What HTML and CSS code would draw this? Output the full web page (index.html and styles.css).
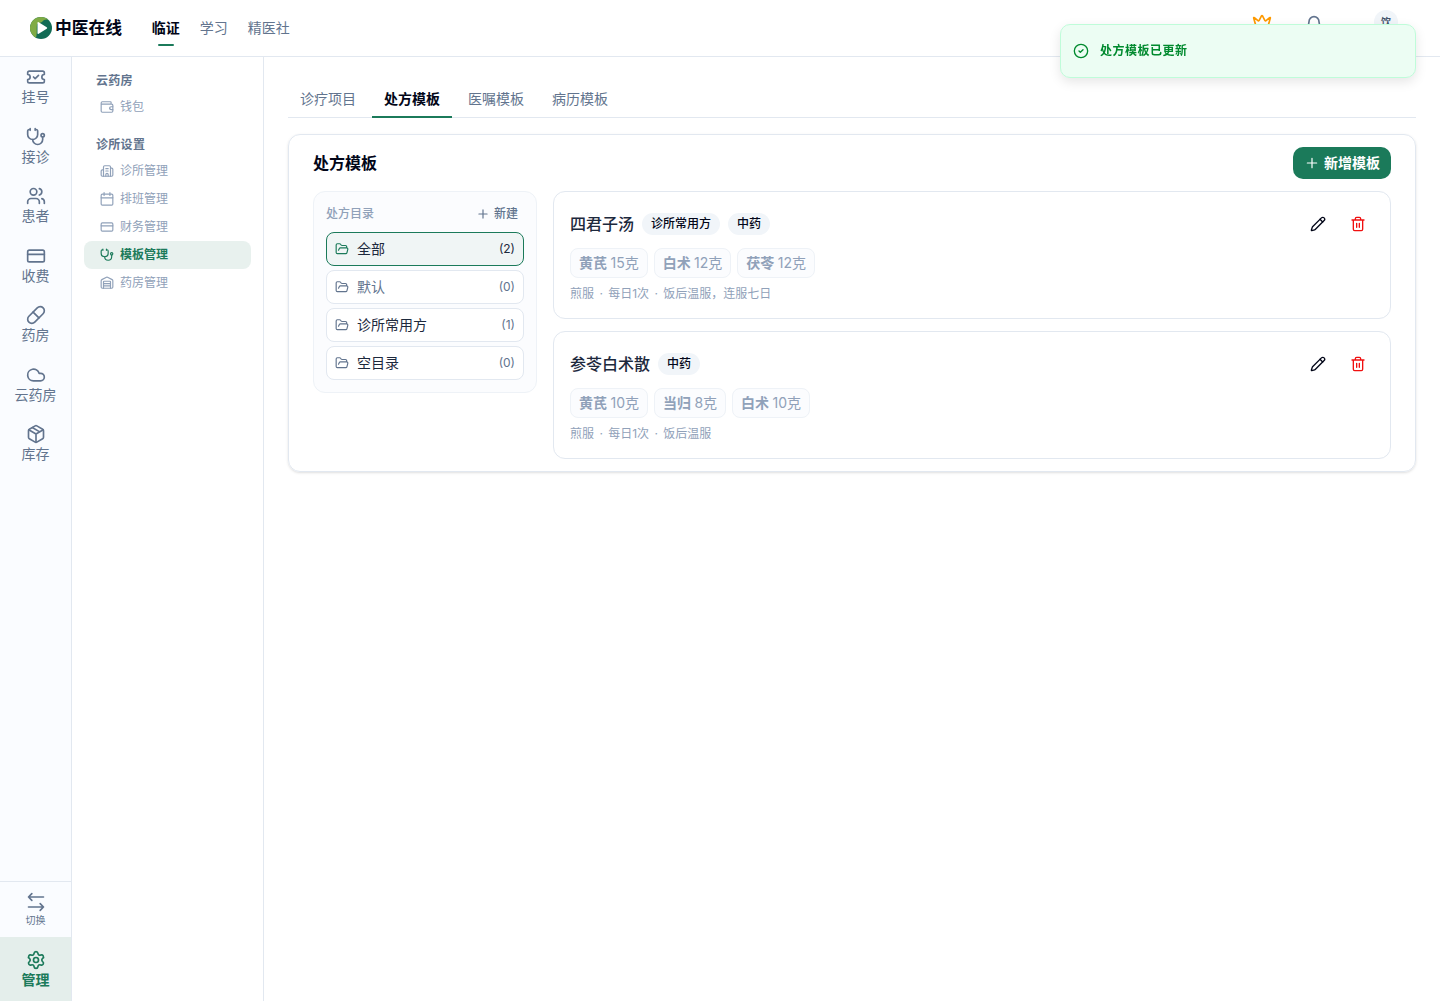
FILE: index.html
```html
<!DOCTYPE html>
<html lang="zh-CN">
<head>
<meta charset="UTF-8">
<title>处方模板</title>
<link rel="stylesheet" href="styles.css">
</head>
<body>
<svg class="sprite">
	<symbol id="ticket" viewBox="0 0 24 24"><path d="M2 9a3 3 0 1 1 0 6v2a2 2 0 0 0 2 2h16a2 2 0 0 0 2-2v-2a3 3 0 1 1 0-6V7a2 2 0 0 0-2-2H4a2 2 0 0 0-2 2Z"/><path d="m9 12 2 2 4-4"/></symbol>
	<symbol id="stethoscope" viewBox="0 0 24 24"><path d="M11 2v2M5 2v2M5 3H4a2 2 0 0 0-2 2v4a6 6 0 0 0 12 0V5a2 2 0 0 0-2-2h-1"/><path d="M8 15a6 6 0 0 0 12 0v-3"/><circle cx="20" cy="10" r="2"/></symbol>
	<symbol id="users" viewBox="0 0 24 24"><path d="M16 21v-2a4 4 0 0 0-4-4H6a4 4 0 0 0-4 4v2"/><path d="M16 3.128a4 4 0 0 1 0 7.744M22 21v-2a4 4 0 0 0-3-3.87"/><circle cx="9" cy="7" r="4"/></symbol>
	<symbol id="card" viewBox="0 0 24 24"><rect width="20" height="14" x="2" y="5" rx="2"/><path d="M2 10h20"/></symbol>
	<symbol id="pill" viewBox="0 0 24 24"><path d="m10.5 20.5 10-10a4.95 4.95 0 1 0-7-7l-10 10a4.95 4.95 0 1 0 7 7Z"/><path d="m8.5 8.5 7 7"/></symbol>
	<symbol id="cloud" viewBox="0 0 24 24"><path d="M17.5 19H9a7 7 0 1 1 6.71-9h1.79a4.5 4.5 0 1 1 0 9Z"/></symbol>
	<symbol id="package" viewBox="0 0 24 24"><path d="M11 21.73a2 2 0 0 0 2 0l7-4A2 2 0 0 0 21 16V8a2 2 0 0 0-1-1.73l-7-4a2 2 0 0 0-2 0l-7 4A2 2 0 0 0 3 8v8a2 2 0 0 0 1 1.73z"/><path d="M12 22V12M3.29 7 12 12l8.71-5M7.5 4.27l9 5.15"/></symbol>
	<symbol id="switch" viewBox="0 0 24 24"><path d="M7 2 3 6l4 4M3 6h18M17 14l4 4-4 4M21 18H3"/></symbol>
	<symbol id="settings" viewBox="0 0 24 24"><path d="M9.671 4.136a2.34 2.34 0 0 1 4.659 0 2.34 2.34 0 0 0 3.319 1.915 2.34 2.34 0 0 1 2.33 4.033 2.34 2.34 0 0 0 0 3.831 2.34 2.34 0 0 1-2.33 4.033 2.34 2.34 0 0 0-3.319 1.915 2.34 2.34 0 0 1-4.659 0 2.34 2.34 0 0 0-3.32-1.915 2.34 2.34 0 0 1-2.33-4.033 2.34 2.34 0 0 0 0-3.831A2.34 2.34 0 0 1 6.35 6.051a2.34 2.34 0 0 0 3.319-1.915"/><circle cx="12" cy="12" r="3"/></symbol>
	<symbol id="wallet" viewBox="0 0 24 24"><path d="M17 14h.01"/><path d="M19 7V4a1 1 0 0 0-1-1H4a2 2 0 0 0-2 2v14a2 2 0 0 0 2 2h16a2 2 0 0 0 2-2V9a2 2 0 0 0-2-2H3.5"/><path d="M22 11.5h-3a2.5 2.5 0 0 0 0 5h3"/></symbol>
	<symbol id="hospital" viewBox="0 0 24 24"><path d="M10 12h4M10 8h4M14 21v-3a2 2 0 0 0-4 0v3"/><path d="M6 10H4a2 2 0 0 0-2 2v7a2 2 0 0 0 2 2h16a2 2 0 0 0 2-2V9a2 2 0 0 0-2-2h-2"/><path d="M6 21V5a2 2 0 0 1 2-2h8a2 2 0 0 1 2 2v16"/></symbol>
	<symbol id="calendar" viewBox="0 0 24 24"><path d="M7 1v5M17 1v5M2 10h20"/><rect width="20" height="19" x="2" y="3.500" rx="2"/></symbol>
	<symbol id="warehouse" viewBox="0 0 24 24"><path d="M18 21V10a1 1 0 0 0-1-1H7a1 1 0 0 0-1 1v11"/><path d="M22 19a2 2 0 0 1-2 2H4a2 2 0 0 1-2-2V8a2 2 0 0 1 1.132-1.803l7.95-3.974a2 2 0 0 1 1.837 0l7.948 3.974A2 2 0 0 1 22 8z"/><path d="M6 13h12M6 17h12"/></symbol>
	<symbol id="folder" viewBox="0 0 24 24"><path d="m6 14 1.5-2.9A2 2 0 0 1 9.24 10H20a2 2 0 0 1 1.94 2.5l-1.54 6a2 2 0 0 1-1.95 1.5H4a2 2 0 0 1-2-2V5a2 2 0 0 1 2-2h3.9a2 2 0 0 1 1.69.9l.81 1.2a2 2 0 0 0 1.67.9H18a2 2 0 0 1 2 2v2"/></symbol>
	<symbol id="plus" viewBox="0 0 24 24"><path d="M5 12h14M12 5v14"/></symbol>
	<symbol id="pencil" viewBox="0 0 24 24"><path d="M21.174 6.812a1 1 0 0 0-3.986-3.987L3.842 16.174a2 2 0 0 0-.5.83l-1.321 4.352a.5.5 0 0 0 .623.622l4.353-1.32a2 2 0 0 0 .83-.497z"/><path d="m15 5 4 4"/></symbol>
	<symbol id="trash" viewBox="0 0 24 24"><path d="M3 6h18M19 6v14a2 2 0 0 1-2 2H7a2 2 0 0 1-2-2V6M8 6V4a2 2 0 0 1 2-2h4a2 2 0 0 1 2 2v2M10 11v6M14 11v6"/></symbol>
	<symbol id="crown" viewBox="0 0 24 24"><path d="M11.562 3.266a.5.5 0 0 1 .876 0L15.39 8.87a1 1 0 0 0 1.516.294L21.183 5.5a.5.5 0 0 1 .798.519l-2.834 10.246a1 1 0 0 1-.956.734H5.81a1 1 0 0 1-.957-.734L2.02 6.02a.5.5 0 0 1 .798-.519l4.276 3.664a1 1 0 0 0 1.516-.294z"/><path d="M5 21h14"/></symbol>
	<symbol id="bell" viewBox="0 0 24 24"><path d="M10.268 21a2 2 0 0 0 3.464 0"/><path d="M3.262 15.326A1 1 0 0 0 4 17h16a1 1 0 0 0 .74-1.673C19.41 13.956 18 12.499 18 8A6 6 0 0 0 6 8c0 4.499-1.411 5.956-2.738 7.326"/></symbol>
	<symbol id="check" viewBox="0 0 24 24"><circle cx="12" cy="12" r="10"/><path d="m9 12 2 2 4-4"/></symbol>
</svg>

<header class="header">
	<div class="logo">
		<svg viewBox="0 0 22 22">
			<circle cx="11" cy="11" r="11" fill="#126b55"/>
			<path d="M6 20.8A11 11 0 0 1 11 0c3 0 5.500 1 7.400 2.700C16 2 13.500 2.600 12 5L7 7c-.6 5 .3 9.500-1 13.800Z" fill="#7fab45"/>
			<path d="M7.500 6v10q0 1.300 1.200.7l8-4.900q1.100-.8 0-1.600l-8-4.900Q7.500 4.700 7.500 6Z" fill="#fff"/>
		</svg>
		<span>中医在线</span>
	</div>
	<nav class="top_nav">
		<a class="on">临证</a>
		<a>学习</a>
		<a>精医社</a>
	</nav>
	<div class="tools">
		<svg class="icon crown"><use href="#crown"/></svg>
		<svg class="icon bell"><use href="#bell"/></svg>
		<span class="avatar">饮</span>
	</div>
</header>

<div class="wrap">
	<aside class="rail">
		<a><svg class="icon"><use href="#ticket"/></svg><span>挂号</span></a>
		<a><svg class="icon"><use href="#stethoscope"/></svg><span>接诊</span></a>
		<a><svg class="icon"><use href="#users"/></svg><span>患者</span></a>
		<a><svg class="icon"><use href="#card"/></svg><span>收费</span></a>
		<a><svg class="icon"><use href="#pill"/></svg><span>药房</span></a>
		<a><svg class="icon"><use href="#cloud"/></svg><span>云药房</span></a>
		<a><svg class="icon"><use href="#package"/></svg><span>库存</span></a>
		<a class="switch"><svg class="icon"><use href="#switch"/></svg><span>切换</span></a>
		<a class="manage"><svg class="icon"><use href="#settings"/></svg><span>管理</span></a>
	</aside>

	<aside class="menu">
		<div class="group">
			<h3>云药房</h3>
			<a><svg class="icon"><use href="#wallet"/></svg>钱包</a>
		</div>
		<div class="group">
			<h3>诊所设置</h3>
			<a><svg class="icon"><use href="#hospital"/></svg>诊所管理</a>
			<a><svg class="icon"><use href="#calendar"/></svg>排班管理</a>
			<a><svg class="icon"><use href="#card"/></svg>财务管理</a>
			<a class="on"><svg class="icon"><use href="#stethoscope"/></svg>模板管理</a>
			<a><svg class="icon"><use href="#warehouse"/></svg>药房管理</a>
		</div>
	</aside>

	<main class="main">
		<nav class="tabs">
			<a>诊疗项目</a>
			<a class="on">处方模板</a>
			<a>医嘱模板</a>
			<a>病历模板</a>
		</nav>
		<section class="card">
			<div class="card_head">
				<h2>处方模板</h2>
				<button class="add"><svg class="icon"><use href="#plus"/></svg>新增模板</button>
			</div>
			<div class="card_body">
				<div class="folders">
					<div class="folders_head">
						<span>处方目录</span>
						<a><svg class="icon"><use href="#plus"/></svg>新建</a>
					</div>
					<ul>
						<li class="on"><svg class="icon"><use href="#folder"/></svg><span>全部</span><em>(2)</em></li>
						<li class="default"><svg class="icon"><use href="#folder"/></svg><span>默认</span><em>(0)</em></li>
						<li><svg class="icon"><use href="#folder"/></svg><span>诊所常用方</span><em>(1)</em></li>
						<li><svg class="icon"><use href="#folder"/></svg><span>空目录</span><em>(0)</em></li>
					</ul>
				</div>
				<div class="list">
					<article class="tpl">
						<div class="tpl_head">
							<h4>四君子汤</h4>
							<span class="tag">诊所常用方</span>
							<span class="tag">中药</span>
							<div class="actions">
								<button><svg class="icon"><use href="#pencil"/></svg></button>
								<button class="del"><svg class="icon"><use href="#trash"/></svg></button>
							</div>
						</div>
						<div class="herbs">
							<span><b>黄芪</b> 15克</span>
							<span><b>白术</b> 12克</span>
							<span><b>茯苓</b> 12克</span>
						</div>
						<p>煎服 · 每日1次 · 饭后温服，连服七日</p>
					</article>
					<article class="tpl">
						<div class="tpl_head">
							<h4>参苓白术散</h4>
							<span class="tag">中药</span>
							<div class="actions">
								<button><svg class="icon"><use href="#pencil"/></svg></button>
								<button class="del"><svg class="icon"><use href="#trash"/></svg></button>
							</div>
						</div>
						<div class="herbs">
							<span><b>黄芪</b> 10克</span>
							<span><b>当归</b> 8克</span>
							<span><b>白术</b> 10克</span>
						</div>
						<p>煎服 · 每日1次 · 饭后温服</p>
					</article>
				</div>
			</div>
		</section>
	</main>
</div>

<div class="toast"><svg class="icon"><use href="#check"/></svg>处方模板已更新</div>
</body>
</html>
```
FILE: styles.css
```css
*{margin: 0;padding: 0;box-sizing: border-box;}
body{
	height: 100vh;
	display: flex;
	flex-direction: column;
	overflow: hidden;
	background: #fff;
	color: #020618;
	font: 14px/20px Inter, "Noto Sans CJK SC", sans-serif;
	white-space: nowrap;
}
ul{list-style: none;}
em{font-style: normal;}
button{border: 0;background: none;font: inherit;color: inherit;}
.sprite{display: none;}
.icon{
	width: 20px;
	height: 20px;
	flex: none;
	fill: none;
	stroke: currentColor;
	stroke-width: 2;
	stroke-linecap: round;
	stroke-linejoin: round;
}

/* header */
.header{
	flex: none;
	height: 57px;
	border-bottom: 1px solid #e2e8f0;
	display: flex;
	align-items: center;
	padding: 0 42px 0 30px;
}
.logo{
	display: flex;
	align-items: center;
	gap: 3px;
	font-size: 16.8px;
	font-weight: 600;
}
.logo svg{width: 22px;height: 22px;}
.top_nav{
	display: flex;
	gap: 20px;
	margin-left: 29.5px;
	color: #62748e;
}
.top_nav a{
	height: 36px;
	padding-top: 8px;
}
.top_nav .on{color: #020618;font-weight: 600;}
.top_nav .on::after{
	content: "";
	display: block;
	width: 16px;
	height: 2px;
	margin: 6px auto 0;
	border-radius: 2px;
	background: #1b7a5a;
}
.tools{
	height: 56px;
	margin-left: auto;
	display: flex;
	align-items: flex-start;
	padding-top: 10px;
}
.crown{margin-top: 3px;color: #fe9a00;}
.bell{margin: 5px 50px 0 32px;color: #62748e;}
.avatar{
	width: 24px;
	height: 24px;
	border-radius: 50%;
	background: #f1f5f9;
	color: #45556c;
	font-size: 10px;
	font-weight: 600;
	line-height: 24px;
	text-align: center;
}

.wrap{flex: 1;display: flex;min-height: 0;}

/* left rail */
.rail{
	width: 72px;
	flex: none;
	display: flex;
	flex-direction: column;
	border-right: 1px solid #e2e8f0;
	background: #fafcff;
	color: #62748e;
}
.rail a{
	height: 59.5px;
	padding-top: 10px;
	display: flex;
	flex-direction: column;
	align-items: center;
	gap: 1px;
	line-height: 17.5px;
}
.rail .switch{
	height: 56px;
	margin-top: auto;
	gap: 0;
	border-top: 1px solid #e2e8f0;
	font-size: 10px;
}
.rail .manage{
	height: 64px;
	padding-top: 13px;
	background: #e4eeeb;
	color: #1b7a5a;
	font-weight: 600;
}

/* second level menu */
.menu{
	width: 192px;
	flex: none;
	padding: 12px;
	border-right: 1px solid #e2e8f0;
	display: flex;
	flex-direction: column;
	gap: 12px;
	font-size: 12px;
}
.menu h3{
	padding-left: 12px;
	font-size: 12px;
	font-weight: 600;
	line-height: 24px;
	letter-spacing: .3px;
	color: #62748e;
}
.menu a{
	height: 28px;
	padding-left: 16px;
	display: flex;
	align-items: center;
	gap: 6px;
	border-radius: 8px;
	color: #90a1b9;
}
.menu .icon{width: 14px;height: 14px;}
.menu .on{
	background: #e8f1ee;
	color: #1b7a5a;
	font-weight: 600;
}

.main{flex: 1;padding: 24px;}
.tabs{
	height: 37px;
	display: flex;
	gap: 4px;
	border-bottom: 1px solid #e2e8f0;
	color: #62748e;
}
.tabs a{height: 37px;padding: 8px 12px 0;}
.tabs .on{
	color: #020618;
	font-weight: 600;
	border-bottom: 2px solid #1b7a5a;
}

.card{
	margin-top: 16px;
	padding: 12px 24px;
	border: 1px solid #e2e8f0;
	border-radius: 12px;
	box-shadow: 0 1px 3px rgba(0,0,0,.1), 0 1px 2px -1px rgba(0,0,0,.1);
}
.card_head{
	display: flex;
	align-items: center;
	justify-content: space-between;
}
.card_head h2{font-size: 16px;font-weight: 600;}
.add{
	width: 98px;
	height: 32px;
	display: flex;
	align-items: center;
	justify-content: center;
	gap: 4px;
	border-radius: 10px;
	background: #1b7a5a;
	color: #fff;
	font-weight: 600;
}
.add .icon{width: 16px;height: 16px;stroke-width: 1.8;}
.card_body{
	margin-top: 12px;
	display: flex;
	align-items: flex-start;
	gap: 16px;
}

/* folders */
.folders{
	width: 224px;
	flex: none;
	padding: 12px;
	border: 1px solid #eef2f7;
	border-radius: 12px;
	background: #fbfcfe;
}
.folders_head{
	height: 20px;
	margin-bottom: 8px;
	display: flex;
	align-items: center;
	justify-content: space-between;
	font-size: 12px;
	font-weight: 500;
	color: #90a1b9;
}
.folders_head a{
	display: flex;
	align-items: center;
	gap: 4px;
	padding-right: 6px;
	color: #62748e;
}
.folders_head .icon{width: 14px;height: 14px;}
.folders ul{display: flex;flex-direction: column;gap: 4px;}
.folders li{
	height: 34px;
	padding: 0 8px;
	display: flex;
	align-items: center;
	gap: 8px;
	border: 1px solid #e2e8f0;
	border-radius: 8px;
	background: #fff;
	color: #1d293d;
}
.folders li .icon{width: 14px;height: 14px;color: #62748e;}
.folders li em{margin-left: auto;font-size: 12px;color: #62748e;}
.folders .default{color: #62748e;}
.folders .on{border-color: #1b7a5a;background: #f0f5f5;}
.folders .on .icon{color: #1b7a5a;}
.folders .on em{color: #1d293d;}

/* templates */
.list{
	flex: 1;
	display: flex;
	flex-direction: column;
	gap: 12px;
}
.tpl{
	padding: 16px;
	border: 1px solid #e2e8f0;
	border-radius: 12px;
}
.tpl_head{
	height: 32px;
	display: flex;
	align-items: center;
	gap: 8px;
}
.tpl h4{font-size: 16px;font-weight: 500;color: #1d293d;}
.tag{
	height: 22px;
	padding: 0 9px;
	border-radius: 11px;
	background: #f1f5f9;
	font-size: 12px;
	font-weight: 500;
	line-height: 22px;
}
.actions{margin-left: auto;display: flex;gap: 8px;}
.actions button{
	width: 32px;
	height: 32px;
	display: flex;
	align-items: center;
	justify-content: center;
}
.actions .icon{width: 16px;height: 16px;}
.actions .del{color: #f01010;}
.herbs{
	display: flex;
	gap: 6px;
	margin: 8px 0;
}
.herbs span{
	height: 30px;
	padding: 4px 8px;
	border: 1px solid #eef2f7;
	border-radius: 8px;
	background: #fbfcfe;
	color: #90a1b9;
	word-spacing: -.5px;
}
.herbs b{font-weight: 600;}
.tpl p{font-size: 12px;line-height: 16px;color: #90a1b9;word-spacing: 2px;}

.toast{
	position: fixed;
	top: 24px;
	right: 24px;
	width: 356px;
	height: 54px;
	padding: 0 12px;
	display: flex;
	align-items: center;
	gap: 11px;
	border: 1px solid #bffcd9;
	border-radius: 10px;
	background: #ecfdf3;
	box-shadow: 0 4px 12px rgba(0,0,0,.1);
	color: #008a2e;
	font-size: 12px;
	font-weight: 600;
	letter-spacing: .5px;
}
.toast .icon{width: 16px;height: 16px;}
```
